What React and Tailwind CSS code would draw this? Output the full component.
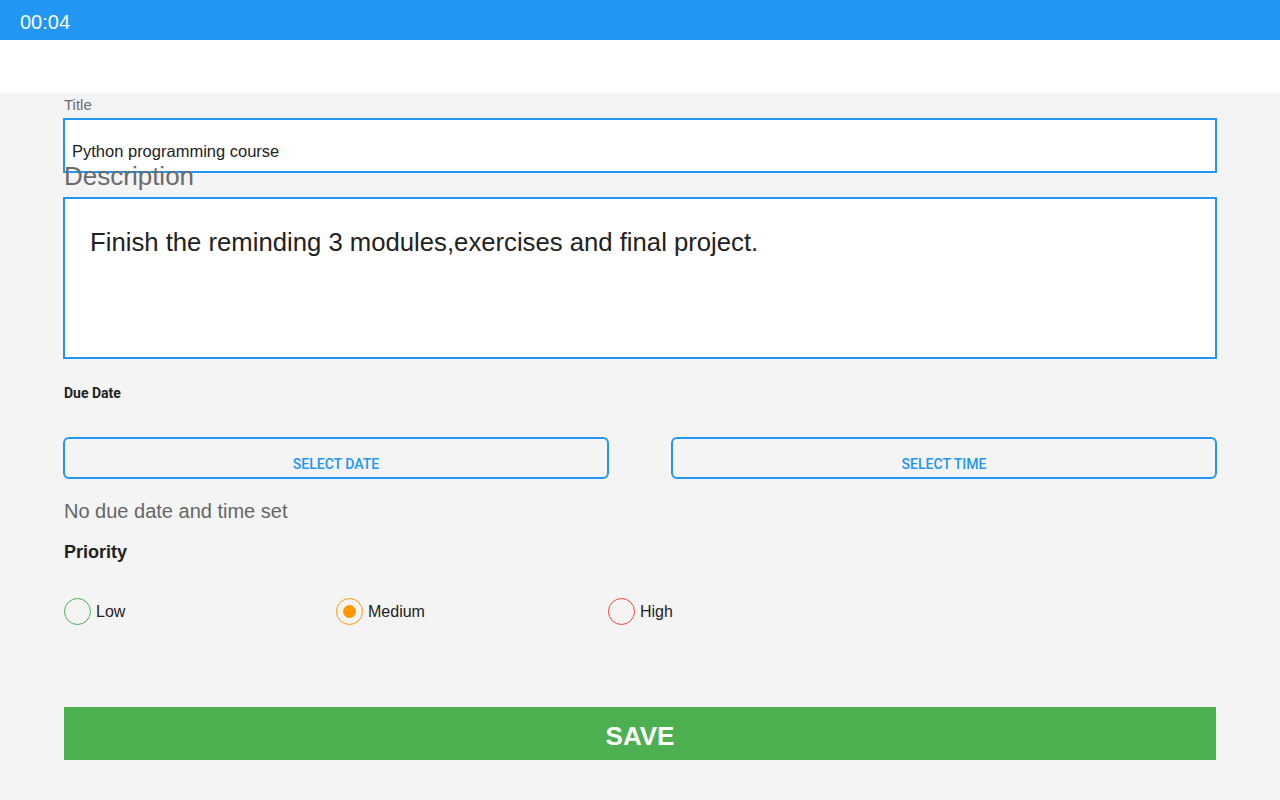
import { useState } from 'react'

function Radio({ label, color, checked, onClick }) {
  return (
    <button type="button" onClick={onClick} className="flex items-center w-[272px] text-left">
      <span
        className="w-[27px] h-[27px] rounded-full border flex items-center justify-center"
        style={{ borderColor: color }}
      >
        {checked && <span className="w-[13px] h-[13px] rounded-full" style={{ backgroundColor: color }} />}
      </span>
      <span className="ml-[5px] text-[16px] text-[#222]">{label}</span>
    </button>
  )
}

export default function App() {
  const [priority, setPriority] = useState('medium')
  const [title, setTitle] = useState('Python programming course')
  const [desc, setDesc] = useState('Finish the reminding 3 modules,exercises and final project.')

  return (
    <div className="min-h-screen w-full bg-[#f4f4f4] font-['Liberation_Sans',Arial,sans-serif]">
      {/* status bar */}
      <div className="h-10 bg-[#2196F3] flex items-center px-5 pt-[4px]">
        <span className="text-white text-[20px]">00:04</span>
      </div>
      <div className="h-[53px] bg-white" />

      <div className="px-[63px]">
        <div className="text-[15px] text-[#6b6b6b] pt-[3px] pl-px leading-[18px]">Title</div>
        <div className="mt-[4px] h-[55px] border-2 border-[#2196F3] bg-white flex items-end pb-[7px] px-[7px]">
          <input
            value={title}
            onChange={(e) => setTitle(e.target.value)}
            className="w-full outline-none text-[16.5px] text-[#222] bg-transparent"
          />
        </div>
        <div className="-mt-[12px] relative text-[26px] text-[#6b6b6b] pl-px leading-[30px]">Description</div>
        <textarea
          value={desc}
          onChange={(e) => setDesc(e.target.value)}
          className="mt-[6px] block w-full h-[162px] border-2 border-[#2196F3] bg-white outline-none resize-none px-[25px] pt-[29px] text-[25.7px] leading-[28px] text-[#222]"
        />

        <div className="mt-[27px] pl-px text-[14px] font-bold text-[#222] font-['Roboto',sans-serif] leading-[14px]">Due Date</div>

        <div className="mt-[37px] flex gap-[62px]">
          <button className="flex-1 h-[42px] rounded-[6px] border-2 border-[#2196F3] text-[#2196F3] text-[14px] font-medium font-['Roboto',sans-serif] pt-[12px]">
            SELECT DATE
          </button>
          <button className="flex-1 h-[42px] rounded-[6px] border-2 border-[#2196F3] text-[#2196F3] text-[14px] font-medium font-['Roboto',sans-serif] pt-[12px]">
            SELECT TIME
          </button>
        </div>

        <div className="mt-[20px] pl-px text-[20px] text-[#666] leading-[24px]">No due date and time set</div>
        <div className="mt-[19px] pl-px text-[18px] font-bold text-[#222] leading-[21px]">Priority</div>

        <div className="mt-[35px] flex pl-px">
          <Radio label="Low" color="#4CAF50" checked={priority === 'low'} onClick={() => setPriority('low')} />
          <Radio label="Medium" color="#FF9800" checked={priority === 'medium'} onClick={() => setPriority('medium')} />
          <Radio label="High" color="#F44336" checked={priority === 'high'} onClick={() => setPriority('high')} />
        </div>

        <button className="mt-[82px] ml-px w-[1152px] h-[53px] bg-[#4CAF50] text-white text-[26px] font-bold flex items-center justify-center pt-[6px]">
          SAVE
        </button>
      </div>
    </div>
  )
}
